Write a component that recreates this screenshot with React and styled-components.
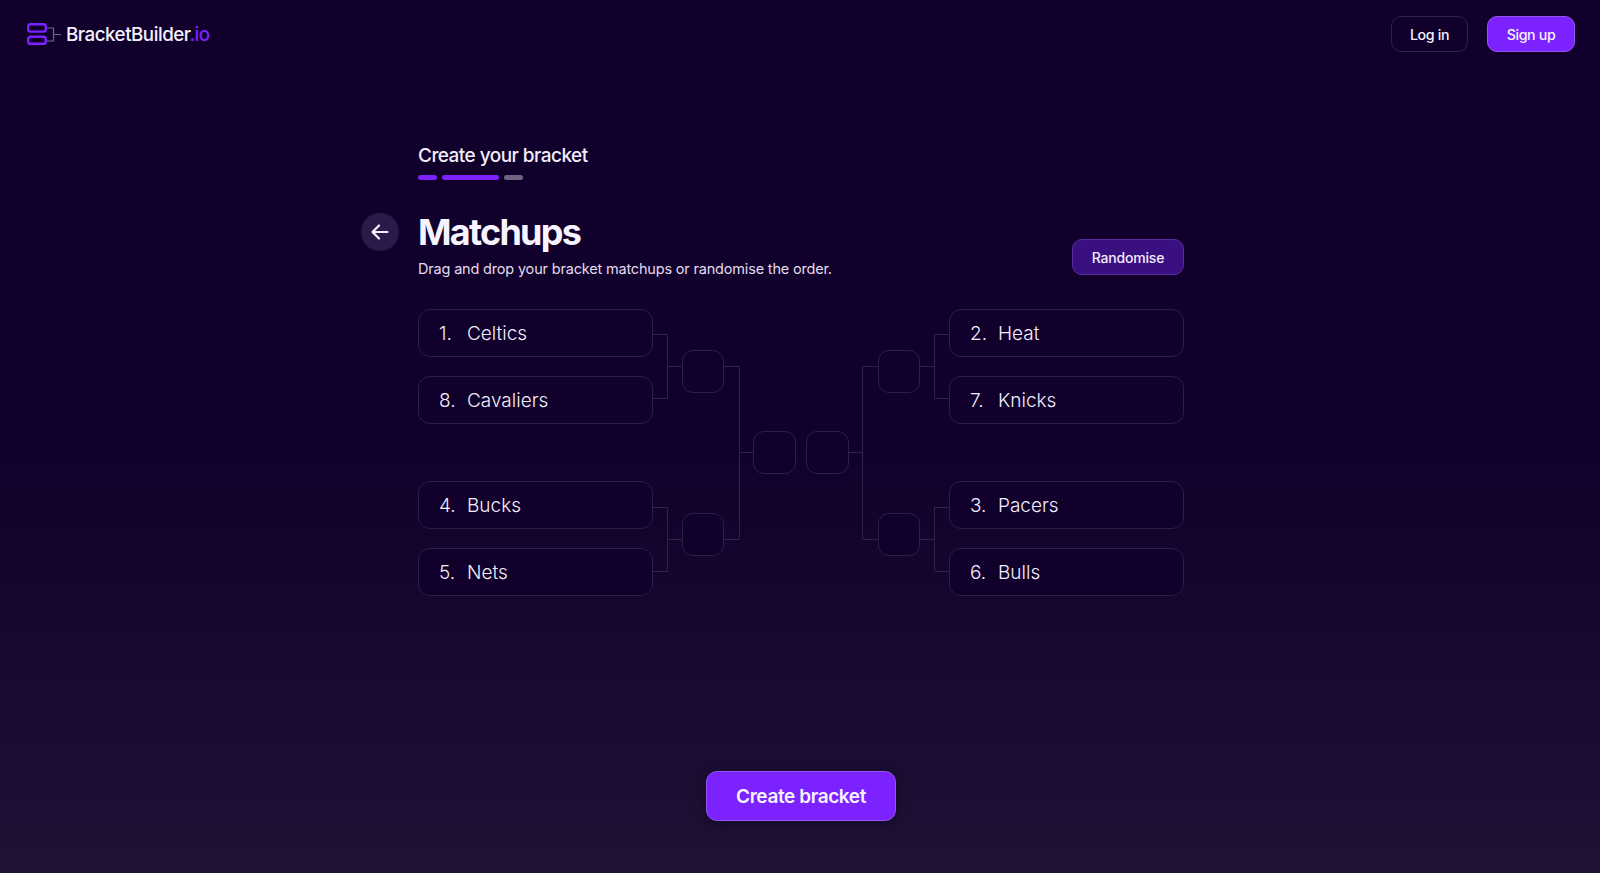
import React from "react";
import styled, { createGlobalStyle } from "styled-components";

const Global = createGlobalStyle`
  * { box-sizing: border-box; }
  html, body { margin: 0; padding: 0; height: 100%; }
  body { background: #10002b; font-family: "Inter", "Noto Sans", sans-serif; color: #f5f0ff; overflow: hidden; }
`;
const Page = styled.div`
  height: 873px; display: flex; flex-direction: column;
  background: linear-gradient(180deg, #10002b 0%, #10002b 50%, #1f1235 100%);
`;
const Nav = styled.header`
  display: flex; align-items: center; justify-content: space-between;
  padding: 16px 25px 0 27px;
`;
const Brand = styled.div`
  display: flex; align-items: center; gap: 5px;
  font-size: 18.8px; font-weight: 500; letter-spacing: -0.5px; color: #f5f0ff;
  span { color: #7b22ff; }
`;
const NavActions = styled.div`display: flex; gap: 19px;`;
const NavButton = styled.button`
  height: 36px; width: ${p => p.$w}px; border-radius: 10px; font: 500 14.2px "Inter", sans-serif; letter-spacing: -0.35px;
  color: #f5f0ff; cursor: pointer;
  background: ${p => p.$primary ? "#7b22ff" : "transparent"};
  border: 1px solid ${p => p.$primary ? "#9354f0" : "#2e2347"};
`;
const Main = styled.main`
  width: 766px; margin: 92px 0 0 418px; display: flex; flex-direction: column;
`;
const StepTitle = styled.div`font-size: 19px; font-weight: 500; letter-spacing: -0.55px; line-height: 24px; color: #f1ecfa;`;
const Progress = styled.div`display: flex; gap: 5px; margin-top: 7px;`;
const Step = styled.div`
  height: 5px; border-radius: 3px; width: ${p => p.$w}px; background: ${p => p.$on ? "#7b22ff" : "#6d6480"};
`;
const HeadRow = styled.div`display: flex; align-items: flex-end; justify-content: space-between; margin-top: 27px;`;
const HeadLeft = styled.div`display: flex; align-items: flex-start;`;
const Back = styled.button`
  width: 38px; height: 38px; border-radius: 50%; border: 0; background: #2a1a49; color: #f5f0ff;
  display: flex; align-items: center; justify-content: center; margin: 6px 19px 0 -57px; padding: 0; flex: none;
`;
const H1 = styled.h1`margin: 0; font-size: 36px; line-height: 50px; font-weight: 700; letter-spacing: -1.75px; color: #f7f3ff;`;
const Sub = styled.p`margin: 0; font-size: 14.5px; line-height: 24px; font-weight: 400; letter-spacing: -0.18px; color: #e2dcee;`;
const Randomise = styled.button`
  width: 112px; height: 36px; border-radius: 10px; background: #3a0f80; border: 1px solid #5a2c9e;
  color: #f1ecfa; font: 500 14px "Inter", sans-serif; letter-spacing: -0.2px; margin-bottom: 6px;
`;
const Bracket = styled.div`display: flex; margin-top: 28px; height: 287px;`;
const Teams = styled.div`width: 235px; display: flex; flex-direction: column; gap: 57px; flex: none;`;
const Pair = styled.div`display: flex; flex-direction: column; gap: 19px;`;
const Team = styled.div`
  height: 48px; border-radius: 12px; border: 1px solid #2a1f45; background: #10002b;
  display: flex; align-items: center; padding-left: 20px; font-size: 19px; font-weight: 300; color: #f3eefa;
`;
const Seed = styled.span`width: 28px; flex: none;`;
const Round = styled.div`
  width: ${p => p.$w}px; flex: none; display: flex; flex-direction: column; gap: 120px; padding-top: ${p => p.$top}px;
  margin-left: ${p => p.$ml || 0}px;
`;
const Slot = styled.div`height: 43px; border-radius: 11px; border: 1px solid #2a1f45; background: #10002b;`;
const WireSvg = styled.svg`
  display: block; flex: none; transform: ${p => p.$flip ? "scaleX(-1)" : "none"};
`;
const Footer = styled.div`margin: auto 0 52px 2px; display: flex; justify-content: center;`;
const Create = styled.button`
  width: 190px; height: 50px; border-radius: 11px; background: #7b22ff; border: 1px solid #9354f0; color: #f7f3ff;
  font: 600 19px "Inter", sans-serif; letter-spacing: -0.4px; box-shadow: 0 4px 14px rgba(10,0,30,.45);
`;

const stroke = "#2e2349";
const WireA = ({ flip }) => (
  <WireSvg $flip={flip} width="29" height="287" fill="none" stroke={stroke}>
    <path d="M0 25.5H14.5V89.5H0M14.5 57.5H29M0 198.5H14.5V262.5H0M14.5 230.5H29" />
  </WireSvg>
);
const WireB = ({ flip }) => (
  <WireSvg $flip={flip} width="29" height="287" fill="none" stroke={stroke}>
    <path d="M0 57.5H15.5V230.5H0M15.5 143.5H29" />
  </WireSvg>
);
const Logo = () => (
  <svg width="34" height="22" viewBox="0 0 34 22" fill="none">
    <path d="M20 5H26.5V18H20M26.5 11.5H34" stroke="#6f6785" strokeWidth="1.2" />
    <rect x="1.2" y="1.2" width="17.6" height="7.4" rx="2.4" stroke="#7b22ff" strokeWidth="2.4" />
    <rect x="1.2" y="13.8" width="17.6" height="7" rx="2.4" stroke="#7b22ff" strokeWidth="2.4" />
  </svg>
);
const Arrow = () => (
  <svg width="18" height="16" viewBox="0 0 18 16" fill="none" stroke="#f5f0ff" strokeWidth="2.2" strokeLinecap="round" strokeLinejoin="round">
    <path d="M16.5 8H1.5M8 1.5 1.5 8 8 14.5" />
  </svg>
);
const TeamPair = ({ items }) => (
  <Pair>{items.map(([n, name]) => <Team key={n}><Seed>{n}.</Seed>{name}</Team>)}</Pair>
);

export default function App() {
  return (
    <>
      <Global />
      <Page>
        <Nav>
          <Brand><Logo /><div>BracketBuilder<span>.io</span></div></Brand>
          <NavActions>
            <NavButton $w={77}>Log in</NavButton>
            <NavButton $w={88} $primary>Sign up</NavButton>
          </NavActions>
        </Nav>
        <Main>
          <StepTitle>Create your bracket</StepTitle>
          <Progress>
            <Step $w={19} $on /><Step $w={57} $on /><Step $w={19} />
          </Progress>
          <HeadRow>
            <HeadLeft>
              <Back aria-label="Back"><Arrow /></Back>
              <div>
                <H1>Matchups</H1>
                <Sub>Drag and drop your bracket matchups or randomise the order.</Sub>
              </div>
            </HeadLeft>
            <Randomise>Randomise</Randomise>
          </HeadRow>
          <Bracket>
            <Teams>
              <TeamPair items={[[1, "Celtics"], [8, "Cavaliers"]]} />
              <TeamPair items={[[4, "Bucks"], [5, "Nets"]]} />
            </Teams>
            <WireA />
            <Round $w={42} $top={41}><Slot /><Slot /></Round>
            <WireB />
            <Round $w={43} $top={122}><Slot /></Round>
            <Round $w={43} $top={122} $ml={10}><Slot /></Round>
            <WireB flip />
            <Round $w={42} $top={41}><Slot /><Slot /></Round>
            <WireA flip />
            <Teams>
              <TeamPair items={[[2, "Heat"], [7, "Knicks"]]} />
              <TeamPair items={[[3, "Pacers"], [6, "Bulls"]]} />
            </Teams>
          </Bracket>
        </Main>
        <Footer><Create>Create bracket</Create></Footer>
      </Page>
    </>
  );
}
